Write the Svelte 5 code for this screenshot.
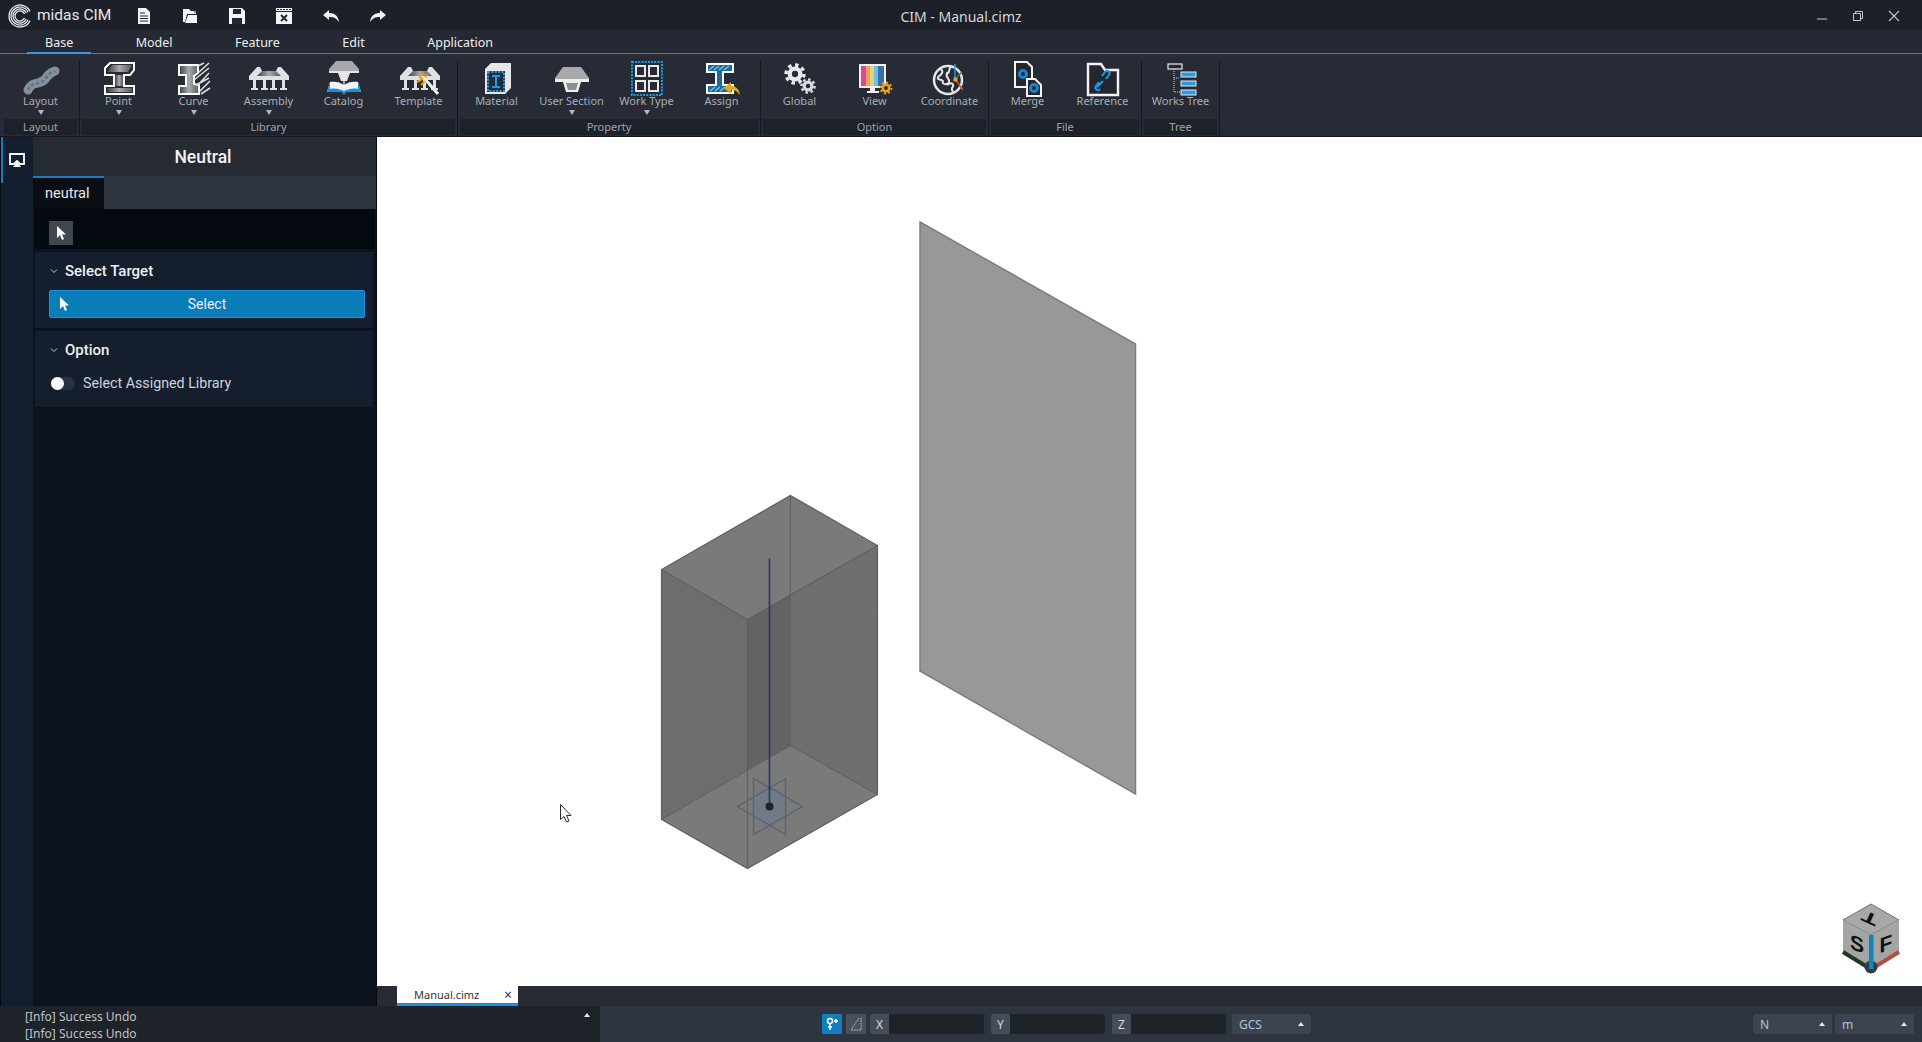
<script>
  const groups = [
    { name: 'Layout', items: [{ id: 'layout', label: 'Layout', arrow: true }] },
    { name: 'Library', items: [
      { id: 'point', label: 'Point', arrow: true },
      { id: 'curve', label: 'Curve', arrow: true },
      { id: 'assembly', label: 'Assembly', arrow: true },
      { id: 'catalog', label: 'Catalog' },
      { id: 'template', label: 'Template' } ] },
    { name: 'Property', items: [
      { id: 'material', label: 'Material' },
      { id: 'usersection', label: 'User Section', arrow: true },
      { id: 'worktype', label: 'Work Type', arrow: true },
      { id: 'assign', label: 'Assign' } ] },
    { name: 'Option', items: [
      { id: 'global', label: 'Global' },
      { id: 'view', label: 'View' },
      { id: 'coordinate', label: 'Coordinate' } ] },
    { name: 'File', items: [
      { id: 'merge', label: 'Merge' },
      { id: 'reference', label: 'Reference' } ] },
    { name: 'Tree', items: [{ id: 'workstree', label: 'Works Tree' }] }
  ];
  const menus = ['Base', 'Model', 'Feature', 'Edit', 'Application'];
</script>

{#snippet gear(cx, cy, r, col, hole)}
  <circle cx={cx} cy={cy} r={r} fill={col} />
  <circle cx={cx} cy={cy} r={r * 1.2} fill="none" stroke={col} stroke-width={r * 0.45} pathLength="32" stroke-dasharray="2 2" />
  <circle cx={cx} cy={cy} r={r * 0.42} fill={hole} />
{/snippet}

{#snippet bridge()}
  <path d="M2 15L10 6H13L15 10H29L31 6H34L42 15V19H2Z" fill="#dfe1e4" />
  <path d="M10 15L15 10H29L34 15Z" fill="url(#web)" />
  <path d="M6 19h3v8h2v2h-7v-2h2zM16 19h3v8h2v2h-7v-2h2zM25 19h3v8h2v2h-7v-2h2zM35 19h3v8h2v2h-7v-2h2z" fill="#dfe1e4" />
{/snippet}

{#snippet mushroom()}
  <path d="M13 3H31L39 14V17H5V14Z" fill="#a6a8ac" />
  <path d="M5 15H39V18H31L28 28H16L13 18H5Z" fill="#eceded" />
  <path d="M16 19H28L26 26H18Z" fill="#8c8f94" />
{/snippet}

{#snippet icon(id)}
  <svg class="rib-icon" viewBox="0 0 44 36" width="44" height="36" aria-hidden="true">
    {#if id === 'layout'}
      <path d="M9 29C13 19 22 25 27 17C30 12 33 11 36 10" fill="none" stroke="#8b8e93" stroke-width="9" stroke-linecap="round" />
      <path d="M9 29C13 19 22 25 27 17C30 12 33 11 36 10" fill="none" stroke="#2f7fb4" stroke-width="2.400" stroke-dasharray="3 2.500" />
    {:else if id === 'point'}
      <path d="M8 7L13 2H37V9L33 14H27V25H37V33H8V25H17V14H8Z" fill="#2a2c31" stroke="#fff" stroke-width="2" />
      <path d="M10 11L15 4H35L31 11Z" fill="url(#web)" />
      <rect x="18" y="14" width="8" height="11" fill="url(#web)" />
      <path d="M10 31V27H35V31Z" fill="url(#web)" />
    {:else if id === 'curve'}
      <path d="M7 4H26V12L22 15V23L27 24V33H7V25H14V14H7Z" fill="url(#web)" stroke="#fff" stroke-width="2" />
      <path d="M26 12L37 2M26 5L32 2M26 24L37 12M22 19L37 7M27 31L38 20M24 24L37 17M29 33L38 27" stroke="#dcdde0" stroke-width="1.600" fill="none" />
    {:else if id === 'assembly'}
      {@render bridge()}
    {:else if id === 'catalog'}
      <path d="M14 0H30L37 8V11H7V8Z" fill="#a6a8ac" />
      <path d="M7 10H37V12H28L25 20H19L16 12H7Z" fill="#e4e5e6" />
      <rect x="21" y="20" width="2" height="4" fill="#aaa" />
      <path d="M8 21C13 20 18 21 22 24C26 21 31 20 36 21L39 31H24L22 33L20 31H5Z" fill="#f2f3f4" />
      <path d="M5 31L8 21L8 28C13 27 18 28 22 30C26 28 31 27 36 28L36 21L39 31H24L22 34L20 31Z" fill="#1a8fe0" />
    {:else if id === 'template'}
      <g transform="translate(1 0)">{@render bridge()}</g>
      <path d="M27 17L41 33" stroke="#f2f2f2" stroke-width="3" />
      <path d="M22 15l4 4M25 10v5M31 13l-3 3M20 21l4-2M28 20l-4 4" stroke="#e39a1e" stroke-width="2" fill="none" />
    {:else if id === 'material'}
      <path d="M10 8L16 2H36V27L30 33H10Z" fill="#e6e7e9" />
      <rect x="12" y="10" width="18" height="21" fill="#242b36" />
      <rect x="13" y="11" width="16" height="19" fill="none" stroke="#1a9be8" stroke-width="2" stroke-dasharray="2 1.400" />
      <path d="M17 15H25M17 26H25M21 15V26" stroke="#1a9be8" stroke-width="2" fill="none" />
    {:else if id === 'usersection'}
      <g transform="translate(0 3)">{@render mushroom()}</g>
    {:else if id === 'worktype'}
      <rect x="7" y="1" width="30" height="33" fill="none" stroke="#1a9be8" stroke-width="2" stroke-dasharray="2 1.200" />
      <path d="M11 5H20V15H11ZM24 5H33V15H24ZM11 20H20V30H11ZM24 20H33V30H24Z" fill="none" stroke="#e8e9eb" stroke-width="2" />
    {:else if id === 'assign'}
      <path d="M7 3H33V11H23V24H33V32H7V24H16V11H7Z" fill="#1d6a9c" stroke="#fff" stroke-width="2" />
      <path d="M9 9L14 5M14 9L19 5M19 9L24 5M24 9L29 5M10 30L15 26M15 30L20 26M20 30L25 26" stroke="#7cc0ea" stroke-width="1.400" fill="none" />
      <path d="M24 27L31 21V25C36 25 39 28 40 34C37 30 35 29 31 29V33Z" fill="#e9a822" />
    {:else if id === 'global'}
      {@render gear(17, 13, 7.500, '#e9eaec', '#272b35')}
      {@render gear(30, 25, 5.500, '#d9dade', '#272b35')}
    {:else if id === 'view'}
      <rect x="6" y="3" width="27" height="24" fill="#f1f1f3" />
      <rect x="8" y="5" width="5" height="20" fill="#d14aa0" />
      <rect x="13" y="5" width="4" height="20" fill="#f0a050" />
      <rect x="17" y="5" width="4" height="20" fill="#e8d080" />
      <rect x="21" y="5" width="4" height="20" fill="#6cc0e0" />
      <rect x="25" y="5" width="6" height="20" fill="#3a6ea8" />
      <rect x="17" y="27" width="5" height="4" fill="#f1f1f3" />
      <rect x="14" y="30" width="12" height="2" fill="#f1f1f3" />
      {@render gear(33, 27, 4.500, '#e8a020', '#272b35')}
    {:else if id === 'coordinate'}
      <circle cx="20" cy="19" r="14" fill="none" stroke="#e4e5e7" stroke-width="2.500" />
      <path d="M12 8C17 10 13 14 10 16C9 20 13 17 15 20C13 24 20 24 21 21C22 17 17 17 19 12C22 13 20 8 23 6" fill="none" stroke="#e4e5e7" stroke-width="2" />
      <path d="M19 24C24 20 27 24 24 27C23 30 26 30 25 33" fill="none" stroke="#e4e5e7" stroke-width="2" />
      <path d="M27 18V3" stroke="#1a9be8" stroke-width="1.500" />
      <path d="M27 18L34 11" stroke="#3c7c3c" stroke-width="1.500" />
      <path d="M27 18L35 29" stroke="#c0503a" stroke-width="1.500" />
      <rect x="25.500" y="16.500" width="4" height="4" fill="#e8a020" />
    {:else if id === 'merge'}
      <path d="M9 1H21L26 6V26H9Z" fill="#23262d" stroke="#f2f2f2" stroke-width="2" />
      <circle cx="17" cy="13" r="5" fill="#1b84c8" /><circle cx="17" cy="13" r="2" fill="#23262d" />
      <path d="M21 18H29L35 24V35H21Z" fill="#23262d" stroke="#f2f2f2" stroke-width="2" />
      <circle cx="28" cy="27" r="5" fill="#1b84c8" /><circle cx="28" cy="27" r="2" fill="#23262d" />
    {:else if id === 'reference'}
      <path d="M7 3H20L24 9H37V34H7Z" fill="#24272e" stroke="#f4f4f4" stroke-width="2.400" />
      <path d="M16 26L22 20M19 28C17 31 13 28 15 25L18 21M25 18L28 14C30 11 26 8 24 11L21 15" fill="none" stroke="#1a9be8" stroke-width="2" />
    {:else if id === 'workstree'}
      <rect x="9" y="3" width="14" height="5" fill="none" stroke="#e8e9eb" stroke-width="1.200" />
      <path d="M15 8V31H21M15 17H21M15 31" fill="none" stroke="#d5d6d9" stroke-width="1" stroke-dasharray="1 1" />
      <rect x="22" y="11" width="15" height="5" fill="#2b9be2" stroke="#e8e9eb" stroke-width="1" />
      <rect x="22" y="20" width="15" height="5" fill="#2b9be2" stroke="#e8e9eb" stroke-width="1" />
      <rect x="22" y="29" width="15" height="5" fill="#2b9be2" stroke="#e8e9eb" stroke-width="1" />
    {/if}
  </svg>
{/snippet}

<svg class="defs" width="0" height="0" aria-hidden="true">
  <defs>
    <linearGradient id="web" x1="0" y1="0" x2="1" y2="0">
      <stop offset="0" stop-color="#3c3e43" />
      <stop offset="0.5" stop-color="#a9abae" />
      <stop offset="1" stop-color="#55585d" />
    </linearGradient>
  </defs>
</svg>

<div class="app">
  <header class="titlebar">
    <div class="brand">
      <svg class="logo" viewBox="0 0 24 24" width="24" height="24" aria-hidden="true">
        <g fill="none" stroke="#f0f1f2" stroke-width="1.250">
          <path d="M21.970 7.350A11 11 0 1 0 21.970 16.650" />
          <path d="M20.150 8.200A9 9 0 1 0 20.150 15.800" />
          <path d="M18.340 9.040A7 7 0 1 0 18.340 14.960" />
          <path d="M16.530 9.900A5 5 0 1 0 16.530 14.100" />
        </g>
      </svg>
      <span class="brand-name">midas CIM</span>
    </div>
    <div class="quick">
      <svg viewBox="0 0 16 18" width="16" height="18"><path d="M2 1H10L14 5V17H2Z" fill="#f2f3f4" /><path d="M4 6H9M4 9H12M4 11.500H12M4 14H12" stroke="#23262d" stroke-width="1" /></svg>
      <svg viewBox="0 0 18 18" width="18" height="18"><path d="M2 2H8L10 4H15V7H6L4 15H2Z" fill="#f2f3f4" /><path d="M7 8H16V16H4Z" fill="#f2f3f4" /><path d="M11 3h3v3" fill="none" stroke="#23262d" /></svg>
      <svg viewBox="0 0 18 18" width="18" height="18"><path d="M1 1H14L17 4V17H1Z" fill="#f2f3f4" /><rect x="5" y="2" width="8" height="5" fill="#23262d" /><rect x="4" y="11" width="10" height="6" fill="#23262d" /></svg>
      <svg viewBox="0 0 18 18" width="18" height="18"><rect x="1" y="1" width="16" height="16" fill="#f2f3f4" /><path d="M2 2.500H16" stroke="#23262d" stroke-dasharray="2 1" /><rect x="1" y="4" width="16" height="1" fill="#23262d" /><path d="M6 8L12 14M12 8L6 14" stroke="#23262d" stroke-width="2" /></svg>
      <svg viewBox="0 0 18 14" width="18" height="14"><path d="M1 6L7 1V4C12 4 16 6 17 13C14 9 12 8 7 8V11Z" fill="#f2f3f4" /></svg>
      <svg viewBox="0 0 18 14" width="18" height="14"><path d="M17 6L11 1V4C6 4 2 6 1 13C4 9 6 8 11 8V11Z" fill="#f2f3f4" /></svg>
    </div>
    <div class="doc-title">CIM - Manual.cimz</div>
    <div class="win-controls">
      <svg viewBox="0 0 12 12" width="12" height="12"><path d="M1 9H11" stroke="#c4c7cc" /></svg>
      <svg viewBox="0 0 12 12" width="12" height="12"><path d="M1.500 3.500H8.500V10.500H1.500ZM3.500 3.500V1.500H10.500V8.500H8.500" fill="none" stroke="#c4c7cc" /></svg>
      <svg viewBox="0 0 12 12" width="12" height="12"><path d="M1 1L11 11M11 1L1 11" stroke="#c4c7cc" stroke-width="1.100" /></svg>
    </div>
  </header>

  <nav class="menubar">
    {#each menus as m, i}
      <div class="menu" class:active={i === 0}>{m}</div>
    {/each}
  </nav>

  <section class="ribbon">
    {#each groups as g}
      <div class="group">
        <div class="items">
          {#each g.items as it}
            <div class="item">
              {@render icon(it.id)}
              <span class="item-label">{it.label}</span>
              {#if it.arrow}<span class="caret"></span>{/if}
            </div>
          {/each}
        </div>
        <div class="group-label">{g.name}</div>
      </div>
    {/each}
  </section>

  <div class="main">
    <aside class="rail">
      <div class="rail-btn">
        <svg viewBox="0 0 16 15" width="16" height="15"><path d="M1 1H15V11H11L8 8L5 11H1Z" fill="none" stroke="#fff" stroke-width="1.800" /><path d="M8 9L12 14H4Z" fill="#fff" /></svg>
      </div>
    </aside>
    <aside class="panel">
      <div class="panel-title">Neutral</div>
      <div class="tabs"><div class="tab">neutral</div></div>
      <div class="toolstrip">
        <div class="tool">
          <svg viewBox="0 0 12 16" width="12" height="16"><path d="M2 1V13L5 10L7 15L9 14L7 9.500H11Z" fill="#fff" /></svg>
        </div>
      </div>
      <div class="section">
        <div class="sec-head">
          <svg viewBox="0 0 10 6" width="10" height="6"><path d="M2 1.500L5 4.500L8 1.500" fill="none" stroke="#c5c9d0" /></svg>
          <span>Select Target</span>
        </div>
        <button class="select-btn">
          <svg viewBox="0 0 12 16" width="12" height="16"><path d="M2 1V13L5 10L7 15L9 14L7 9.500H11Z" fill="#fff" /></svg>
          <span>Select</span>
        </button>
      </div>
      <div class="section">
        <div class="sec-head">
          <svg viewBox="0 0 10 6" width="10" height="6"><path d="M2 1.500L5 4.500L8 1.500" fill="none" stroke="#c5c9d0" /></svg>
          <span>Option</span>
        </div>
        <div class="toggle-row">
          <span class="toggle"><span class="knob"></span></span>
          <span class="toggle-label">Select Assigned Library</span>
        </div>
      </div>
    </aside>
    <div class="viewport">
      <div class="canvas">
        <svg class="scene" viewBox="377 137 1545 849" aria-label="3D view">
          <polygon points="920,222 1135.500,344 1135.500,794 920,671" fill="#979998" stroke="#7c7e7d" stroke-width="1.500" />

          <g transform="translate(0.500 0.500)">
            <polygon points="661,569 747,619 747,868 661,819" fill="#6c6d6c" />
            <polygon points="747,619 877,545 877,794 747,868" fill="#6e6f6e" />
            <polygon points="747,769 790,745 877,794 747,868" fill="#7a7a79" />
            <polygon points="747,619 790,594 790,745 747,769" fill="#626362" />
            <polygon points="790,495 877,545 747,619 661,569" fill="#7a7a79" />
            <polygon points="661,819 747,769 747,868" fill="#7a7a79" />
            <path d="M790 495V745M661 819L790 745L877 794" fill="none" stroke="#636464" stroke-width="1.200" />
            <path d="M790 495L877 545V794L747 868L661 819V569ZM661 569L747 619L877 545M747 619V868" fill="none" stroke="#5e5f60" stroke-width="1.200" />

            <polygon points="753,794 769,785 785,794 785,818 769,827 753,818" fill="#717a88" opacity="0.8" />
            <path d="M753 778L802 806L753 834ZM785 778L737 806L785 834Z" fill="none" stroke="#5a6474" stroke-width="1.400" />
            <path d="M769 558V806" stroke="#2a3560" stroke-width="1.600" />
            <circle cx="769" cy="806" r="4" fill="#1c2233" />
          </g>

          <path d="M560.500 804.500V819.500L564 816.500L566.500 822L569 821L566.500 815.500H571Z" fill="#fff" stroke="#2a2a2a" stroke-width="1" />

          <polygon points="1871,904 1899,920 1871,935 1843,920" fill="#a8a8a8" stroke="#6d6d6d" />
          <polygon points="1843,920 1871,935 1871,970 1843,952" fill="#a5a5a5" />
          <polygon points="1871,935 1899,920 1899,952 1871,970" fill="#a5a5a5" />
          <path d="M1843 952L1869 968" stroke="#1e3a25" stroke-width="4" />
          <path d="M1873 968L1899 952" stroke="#b5503f" stroke-width="4" />
          <circle cx="1871" cy="967" r="6.500" fill="#333a45" />
          <rect x="1869" y="935" width="4.500" height="34" fill="#1284bf" />
          <text class="cube mid" transform="translate(1870 918) rotate(205) scale(1.300 .75)">T</text>
          <text class="cube" transform="translate(1857 951) skewY(20)">S</text>
          <text class="cube" transform="translate(1886 951) skewY(-20)">F</text>
        </svg>
      </div>
      <div class="doc-tabs">
        <div class="doc-tab"><span>Manual.cimz</span><span class="doc-x">×</span></div>
      </div>
    </div>
  </div>

  <footer class="status">
    <div class="log">
      <div class="log-lines">
        <div>[Info] Success Undo</div>
        <div>[Info] Success Undo</div>
      </div>
      <span class="log-caret"></span>
    </div>
    <div class="coords">
      <div class="snap on">
        <svg viewBox="0 0 14 14" width="14" height="14"><circle cx="5" cy="4" r="2.500" fill="none" stroke="#fff" stroke-width="1.500" /><path d="M5 7V13M3 10H7M9 4H13M11 2V6" stroke="#fff" stroke-width="1.500" /></svg>
      </div>
      <div class="snap">
        <svg viewBox="0 0 14 14" width="14" height="14"><path d="M10 1L2 13H12V1" fill="none" stroke="#a8cfe6" stroke-width="1" stroke-dasharray="1.500 1" /></svg>
      </div>
      <div class="field"><span class="axis">X</span><span class="value"></span></div>
      <div class="field"><span class="axis">Y</span><span class="value"></span></div>
      <div class="field"><span class="axis">Z</span><span class="value"></span></div>
      <div class="combo gcs"><span>GCS</span><i></i></div>
      <div class="spacer"></div>
      <div class="combo"><span>N</span><i></i></div>
      <div class="combo"><span>m</span><i></i></div>
    </div>
  </footer>
</div>

<style>
  :global(body) { margin: 0; background: #1c2028; overflow: hidden; }
  .defs { position: absolute; }
  .app { width: 1922px; height: 1042px; display: flex; flex-direction: column; font-family: "Noto Sans", "Open Sans", sans-serif; color: #e6e8eb; overflow: hidden; }

  .titlebar { height: 29px; margin-top: 1px; flex: none; background: #1c2028; display: flex; align-items: center; position: relative; }
  .brand { display: flex; align-items: center; width: 136px; padding-left: 8px; gap: 5px; box-sizing: border-box; }
  .logo { flex: none; }
  .brand-name { font: 400 15.500px/1 "Roboto", sans-serif; color: #e6e7e9; white-space: nowrap; }
  .quick { display: flex; align-items: center; gap: 29px; }
  .doc-title { position: absolute; left: 0; right: 0; top: 6px; text-align: center; font-size: 14px; line-height: 20px; color: #d4d7db; pointer-events: none; }
  .win-controls { margin-left: auto; display: flex; gap: 24px; padding-right: 22px; align-items: center; }

  .menubar { height: 23px; flex: none; background: #252933; display: flex; padding-left: 27px; gap: 26.500px; border-bottom: 1px solid #3b82c4; }
  .menu { padding: 0 18px; font-size: 12.500px; line-height: 25px; color: #eceef0; height: 23px; box-sizing: border-box; }
  .menu.active { border-bottom: 2px solid #3d94e6; margin-bottom: -1px; height: 24px; }

  .ribbon { height: 83px; flex: none; background: #272b35; display: flex; padding-left: 2px; border-bottom: 1px solid #15181e; box-sizing: border-box; }
  .group { display: flex; flex-direction: column; padding: 0 1px; border-right: 1px solid #14171c; margin-top: 7px; }
  .items { display: flex; margin-top: -7px; padding-top: 7px; box-sizing: border-box; height: 65px; }
  .item { width: 75px; display: flex; flex-direction: column; align-items: center; position: relative; }
  .rib-icon { flex: none; display: block; }
  .item-label { font-size: 11px; line-height: 12px; margin-top: -2px; color: #a9aeb7; white-space: nowrap; }
  .caret { width: 0; height: 0; border-left: 3px solid transparent; border-right: 3px solid transparent; border-top: 5px solid #b4b8be; margin-top: 3px; }
  .group-label { height: 16px; background: #1d2129; margin: 0 1px; font-size: 11px; line-height: 16px; text-align: center; color: #9ea3ac; }

  .main { flex: 1; min-height: 0; display: flex; background: #0c131e; border-left: 1px solid #05080c; }
  .rail { width: 32px; flex: none; background: #131e2e; }
  .rail-btn { height: 46px; border-left: 2px solid #1a7cc0; display: flex; align-items: center; justify-content: center; box-sizing: border-box; padding-right: 2px; }
  .panel { width: 343px; flex: none; background: #0c131e; border-right: 1px solid #05080c; }
  .panel-title { height: 39px; background: #262a33; font: 500 17.500px/41px "Roboto", sans-serif; text-align: center; color: #f2f3f5; padding-right: 3px; overflow: hidden; }
  .tabs { height: 33px; background: #2e343e; }
  .tab { width: 71px; height: 33px; box-sizing: border-box; background: #0a0e14; border-top: 2px solid #1a7cc0; font: 400 14.500px/31px "Roboto", sans-serif; padding-left: 12px; color: #e8eaee; }
  .toolstrip { height: 40px; background: #040a10; box-sizing: border-box; padding: 12px 0 0 15px; margin: 0 1px; }
  .tool { width: 24px; height: 24px; background: #414750; display: flex; align-items: center; justify-content: center; }
  .section { background: #141e2d; margin: 3px 3px 0 2px; height: 76px; box-sizing: border-box; padding: 0 6px 0 14px; }
  .sec-head { display: flex; align-items: center; height: 38px; gap: 6px; font: 500 15px/1 "Roboto", sans-serif; color: #eef0f3; }
  .sec-head svg { flex: none; }
  .select-btn { display: flex; align-items: center; position: relative; width: 316px; height: 28px; padding: 0; background: #0a7db8; border: 1px solid #1a90e0; border-radius: 2px; color: #e8f2f8; font: 400 14px/1 "Roboto", sans-serif; }
  .select-btn svg { position: absolute; left: 8px; top: 5px; }
  .select-btn span { flex: 1; text-align: center; }
  .toggle-row { display: flex; align-items: center; gap: 8px; padding: 7px 0 0 1px; }
  .toggle { width: 25px; height: 13px; background: #2a3140; border-radius: 7px; position: relative; display: block; }
  .knob { position: absolute; left: 1px; top: 0; width: 13px; height: 13px; border-radius: 50%; background: #fff; }
  .toggle-label { font: 400 14.250px/1 "Roboto", sans-serif; color: #cfd3d9; }

  .viewport { flex: 1; min-width: 0; display: flex; flex-direction: column; background: #fff; }
  .canvas { flex: 1; min-height: 0; position: relative; }
  .scene { position: absolute; inset: 0; width: 100%; height: 100%; display: block; }
  .cube { font: 700 21px "Liberation Sans", sans-serif; fill: #111; text-anchor: middle; }
  .cube.mid { dominant-baseline: central; }
  .doc-tabs { height: 20px; flex: none; background: #262b34; padding-left: 20px; display: flex; }
  .doc-tab { width: 121px; box-sizing: border-box; background: #fff; border-bottom: 3px solid #1a8fe0; color: #333; font-size: 11px; line-height: 18px; display: flex; justify-content: space-between; padding: 0 6px 0 17px; }
  .doc-x { font-size: 14px; color: #333; }

  .status { height: 36px; flex: none; display: flex; background: #2f3540; }
  .log { width: 600px; flex: none; background: #1e2229; display: flex; justify-content: space-between; box-sizing: border-box; padding: 2px 10px 0 25px; }
  .log-lines { font-size: 12px; line-height: 17px; color: #bfc3c9; overflow: hidden; height: 34px; }
  .log-caret, .combo i { width: 0; height: 0; border-left: 3px solid transparent; border-right: 3px solid transparent; border-bottom: 4px solid #e6e8eb; display: block; }
  .log-caret { margin-top: 5px; }
  .coords { flex: 1; display: flex; align-items: flex-start; padding: 8px 8px 0 222px; }
  .snap { width: 20px; height: 20px; background: #4a515c; display: flex; align-items: center; justify-content: center; margin-right: 4px; }
  .snap.on { background: #0f7fc0; }
  .field { width: 114px; height: 20px; display: flex; margin-right: 7px; border-radius: 2px; overflow: hidden; }
  .axis { width: 19px; background: #454c57; text-align: center; font-size: 12px; line-height: 21px; color: #d8dbe0; }
  .value { flex: 1; background: #1e2229; }
  .combo { width: 79px; height: 20px; background: #3d4450; border-radius: 2px; display: flex; justify-content: space-between; align-items: center; box-sizing: border-box; padding: 0 7px; font-size: 12px; color: #a9c4da; margin-right: 3px; }
  .combo.gcs { margin-left: -1px; }
  .combo:last-child { margin-right: 0; }
  .spacer { flex: 1; }
</style>
